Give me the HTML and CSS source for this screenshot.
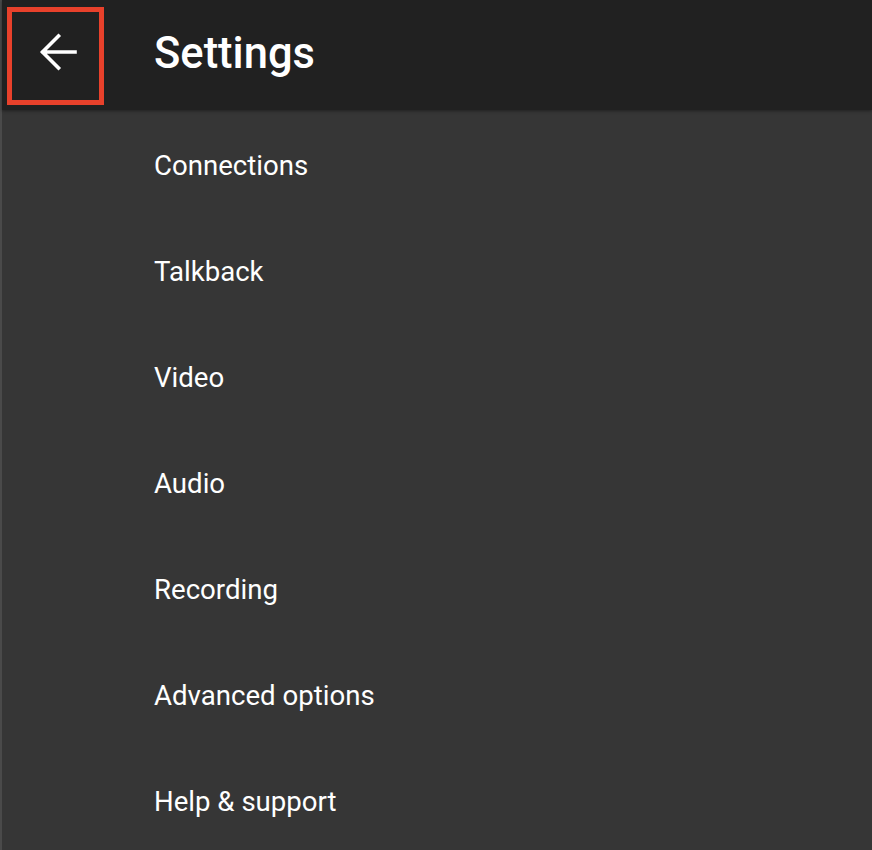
FILE: index.html
```html
<!DOCTYPE html>
<html>
<head>
    <title>Settings</title>
    <link rel="stylesheet" href="styles.css">
</head>
<body>

<div class="app">
    <div class="header">
        <button class="back" aria-label="Back">
            <svg width="40" height="40" viewBox="0 0 40 40">
                <path d="M37 20H5M20.5 4L4.5 20L20.5 36" fill="none" stroke="#fff" stroke-width="3.6" stroke-linecap="square"/>
            </svg>
        </button>
        <h1>Settings</h1>
    </div>

    <ul class="menu">
        <li>Connections</li>
        <li>Talkback</li>
        <li>Video</li>
        <li>Audio</li>
        <li>Recording</li>
        <li>Advanced options</li>
        <li>Help &amp; support</li>
    </ul>
</div>

</body>
</html>
```

FILE: styles.css
```css
html, body {
    margin: 0;
    padding: 0;
    height: 100%;
}

body {
    background-color: #363636;
    font-family: Roboto, "Noto Sans", sans-serif;
    color: #fff;
    overflow: hidden;
}

.app {
    min-height: 100%;
    border-left: 2px solid #4a4a4a;
    box-sizing: border-box;
}

.header {
    display: flex;
    align-items: center;
    height: 110px;
    background-color: #212121;
    box-shadow: 0 1px 3px rgba(0, 0, 0, 0.4);
    position: relative;
}

.back {
    width: 97px;
    height: 98px;
    margin-left: 5px;
    margin-top: 1px;
    box-sizing: border-box;
    border: 5px solid #e8412b;
    background: transparent;
    display: flex;
    align-items: center;
    justify-content: center;
    padding: 0;
    cursor: pointer;
}

.back svg {
    display: block;
    margin-left: 4px;
    margin-top: -8px;
}

h1 {
    margin: 0 0 0 50px;
    margin-top: -4px;
    font-size: 43.5px;
    font-weight: 500;
}

.menu {
    list-style: none;
    margin: 0;
    padding: 3px 0 0 0;
}

.menu li {
    height: 106px;
    line-height: 106px;
    padding-left: 152px;
    font-size: 27.6px;
}
```
